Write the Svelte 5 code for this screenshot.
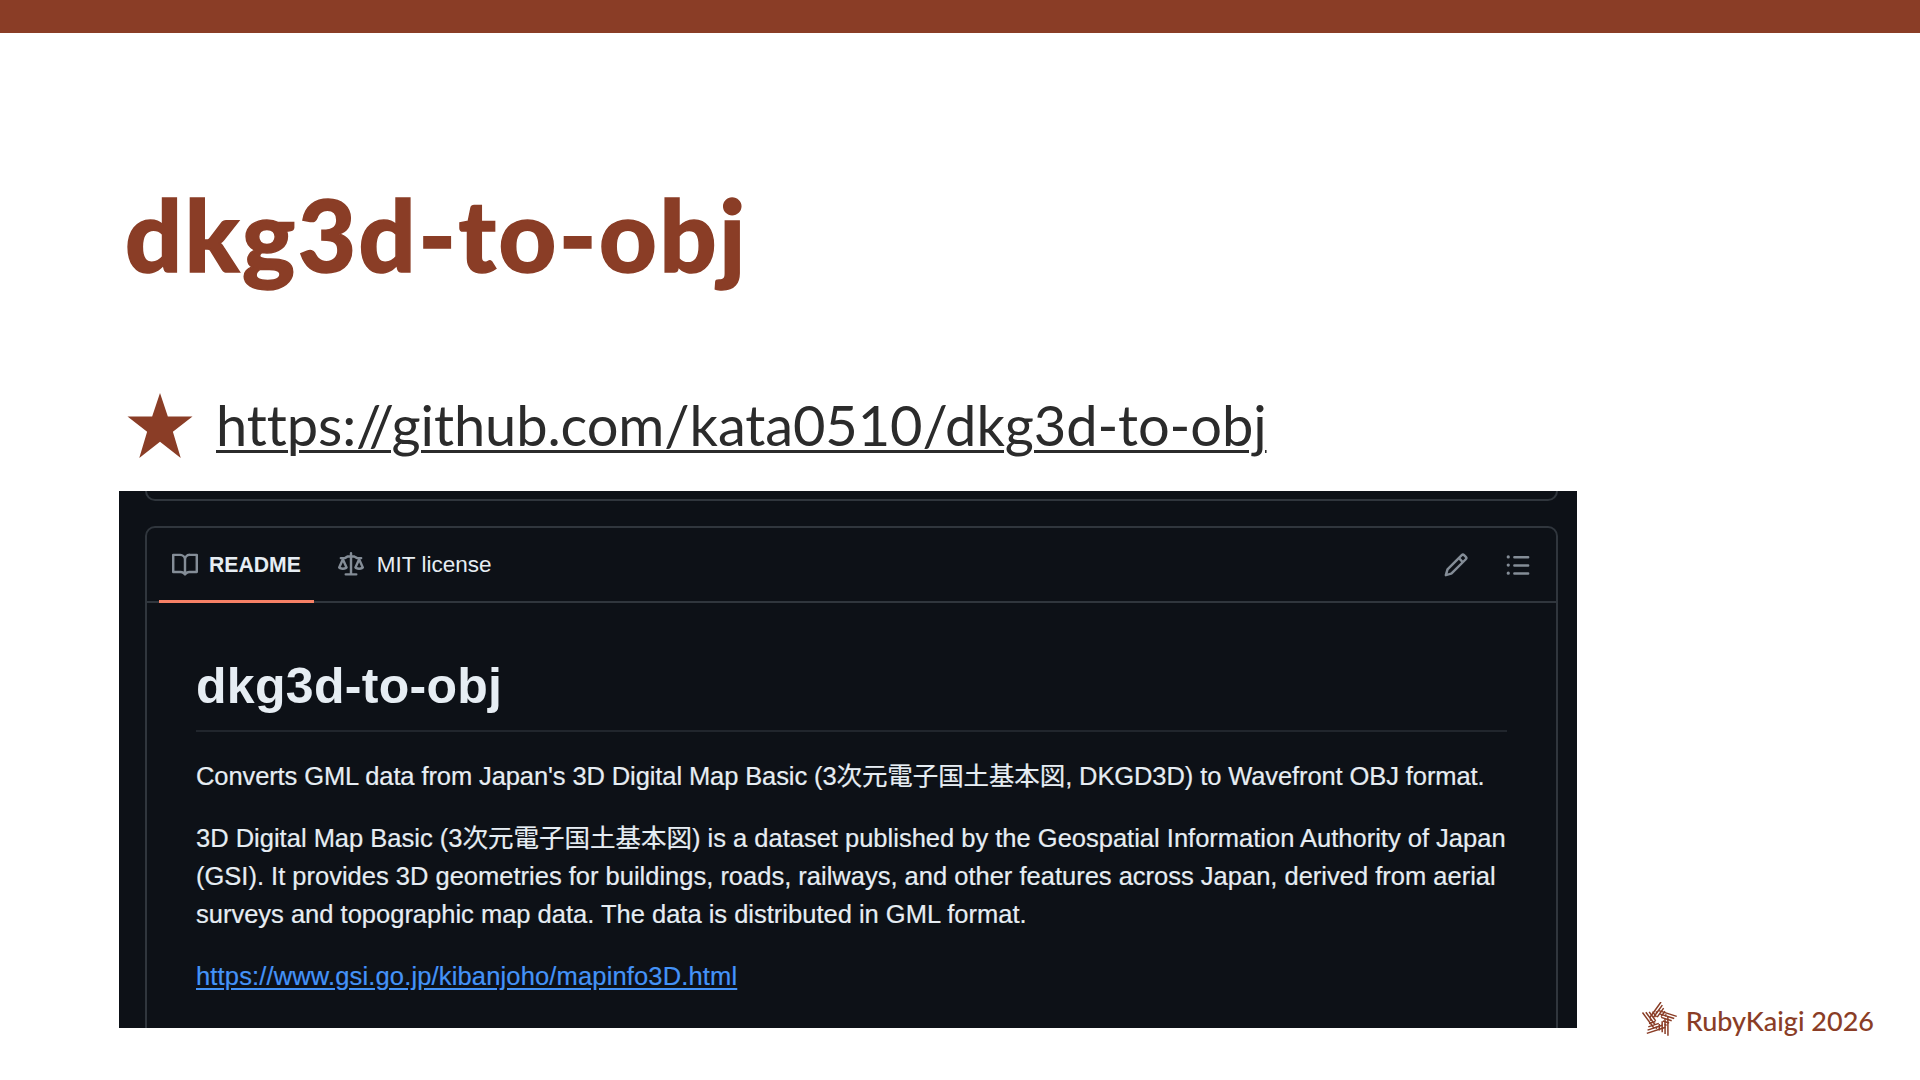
<script>
	const arms = [0, 72, 144, 216, 288];
	const A = [2, -18];
	const B = [-9.5, -2];
	const C = [8, -4];
	const lerp = (p, q, t) => [p[0] + (q[0] - p[0]) * t, p[1] + (q[1] - p[1]) * t];

	// stripes of one star arm, parallel to its long edge
	const stripes = [0, 0.22, 0.44, 0.66, 0.88].map((t) => {
		const s = lerp(B, C, t);
		const e = lerp(A, C, t);
		return `M${s[0].toFixed(2)} ${s[1].toFixed(2)} L${e[0].toFixed(2)} ${e[1].toFixed(2)}`;
	}).join(' ');
</script>

<div class="slide">
	<div class="topbar"></div>
	<h1 class="title">dkg3d-to-obj</h1>
	<div class="link-row">
		<svg class="star" viewBox="0 0 58 58" aria-hidden="true">
			<path d="M29 0 L36 21 L58 21 L40.5 34.5 L47.5 58 L29 43.500 L10.500 58 L17.500 34.500 L0 21 L22 21 Z" />
		</svg>
		<span class="url">https://github.com/kata0510/dkg3d-to-obj</span>
	</div>
	<div class="bottom">
		<div class="shot">
			<div class="prev-card"></div>
			<div class="card">
				<div class="tabs">
					<div class="tab active">
						<svg class="ico" viewBox="0 0 16 16" aria-hidden="true">
							<path d="M0 1.750A.750.750 0 0 1 .750 1h4.253c1.227 0 2.317.590 3 1.501A3.744 3.744 0 0 1 11.006 1h4.245a.750.750 0 0 1 .750.750v10.500a.750.750 0 0 1-.750.750h-4.507a2.250 2.250 0 0 0-1.591.659l-.622.621a.750.750 0 0 1-1.060 0l-.622-.621A2.250 2.250 0 0 0 5.258 13H.750a.750.750 0 0 1-.750-.750Zm7.251 10.324.004-5.073-.002-2.253A2.250 2.250 0 0 0 5.003 2.500H1.500v9h3.757a3.750 3.750 0 0 1 1.994.574ZM8.755 4.750l-.004 7.322a3.752 3.752 0 0 1 1.992-.572H14.500v-9h-3.495a2.250 2.250 0 0 0-2.250 2.250Z" />
						</svg>
						<span>README</span>
					</div>
					<div class="tab license">
						<svg class="ico" viewBox="0 0 16 16" aria-hidden="true">
							<path d="M8.750.750V2h.985c.304 0 .603.080.867.231l1.290.736c.038.022.080.033.124.033h2.234a.750.750 0 0 1 0 1.500h-.427l2.111 4.692a.750.750 0 0 1-.154.838l-.530-.530.529.531-.001.002-.002.002-.006.006-.006.005-.010.010-.045.040c-.210.176-.441.327-.686.450C14.556 10.780 13.880 11 13 11a4.498 4.498 0 0 1-2.023-.454 3.544 3.544 0 0 1-.686-.450l-.045-.040-.016-.015-.006-.006-.004-.004v-.001a.750.750 0 0 1-.154-.838L12.178 4.500h-.162c-.305 0-.604-.079-.868-.231l-1.290-.736a.245.245 0 0 0-.124-.033H8.750V13h2.500a.750.750 0 0 1 0 1.500h-6.500a.750.750 0 0 1 0-1.500h2.500V3.500h-.984a.245.245 0 0 0-.124.033l-1.289.737c-.265.150-.564.230-.869.230h-.162l2.112 4.692a.750.750 0 0 1-.154.838l-.530-.530.529.531-.001.002-.002.002-.006.006-.016.015-.045.040c-.210.176-.441.327-.686.450C4.556 10.780 3.880 11 3 11a4.498 4.498 0 0 1-2.023-.454 3.544 3.544 0 0 1-.686-.450l-.045-.040-.016-.015-.006-.006-.004-.004v-.001a.750.750 0 0 1-.154-.838L2.178 4.500H1.750a.750.750 0 0 1 0-1.500h2.234a.249.249 0 0 0 .125-.033l1.288-.737c.265-.150.564-.230.869-.230h.984V.750a.750.750 0 0 1 1.500 0Zm2.945 8.477c.285.135.718.273 1.305.273s1.020-.138 1.305-.273L13 6.327Zm-10 0c.285.135.718.273 1.305.273s1.020-.138 1.305-.273L3 6.327Z" />
						</svg>
						<span>MIT license</span>
					</div>
					<div class="tools">
						<svg class="ico" viewBox="0 0 16 16" aria-hidden="true">
							<path d="M11.013 1.427a1.750 1.750 0 0 1 2.474 0l1.086 1.086a1.750 1.750 0 0 1 0 2.474l-8.610 8.610c-.210.210-.470.364-.756.445l-3.251.930a.750.750 0 0 1-.927-.928l.929-3.250c.081-.286.235-.547.445-.758l8.610-8.610Zm.176 4.823L9.750 4.810l-6.286 6.287a.253.253 0 0 0-.064.108l-.558 1.953 1.953-.558a.253.253 0 0 0 .108-.064Zm1.238-3.763a.250.250 0 0 0-.354 0L10.811 3.750l1.439 1.440 1.263-1.263a.250.250 0 0 0 0-.354Z" />
						</svg>
						<svg class="ico" viewBox="0 0 16 16" aria-hidden="true">
							<path d="M5.750 2.500h8.500a.750.750 0 0 1 0 1.500h-8.500a.750.750 0 0 1 0-1.500Zm0 5h8.500a.750.750 0 0 1 0 1.500h-8.500a.750.750 0 0 1 0-1.500Zm0 5h8.500a.750.750 0 0 1 0 1.500h-8.500a.750.750 0 0 1 0-1.500ZM2 14a1 1 0 1 1 0-2 1 1 0 0 1 0 2Zm1-6a1 1 0 1 1-2 0 1 1 0 0 1 2 0ZM2 4a1 1 0 1 1 0-2 1 1 0 0 1 0 2Z" />
						</svg>
					</div>
				</div>
				<div class="readme">
					<h2>dkg3d-to-obj</h2>
					<p class="lead">Converts GML data from Japan's 3D Digital Map Basic (3次元電子国土基本図, DKGD3D) to Wavefront OBJ format.</p>
					<p>3D Digital Map Basic (3次元電子国土基本図) is a dataset published by the Geospatial Information Authority of Japan (GSI). It provides 3D geometries for buildings, roads, railways, and other features across Japan, derived from aerial surveys and topographic map data. The data is distributed in GML format.</p>
					<p class="doc-link">https://www.gsi.go.jp/kibanjoho/mapinfo3D.html</p>
				</div>
			</div>
		</div>
		<div class="brand">
			<svg class="mark" viewBox="-18 -18 36 36" aria-hidden="true">
				{#each arms as angle}
					<path transform="rotate({angle})" d={stripes} />
				{/each}
			</svg>
			<span>RubyKaigi 2026</span>
		</div>
	</div>
</div>

<style>
	:global(body) {
		margin: 0;
		background: #fff;
	}

	.slide {
		width: 1920px;
		height: 1080px;
		overflow: hidden;
		display: flex;
		flex-direction: column;
		font-family: 'Lato', 'Noto Sans', sans-serif;
	}

	.topbar {
		height: 33px;
		background: #8a3d26;
	}

	.title {
		margin: 141px 0 0 125px;
		height: 118px;
		font-size: 100px;
		line-height: 118px;
		font-weight: 900;
		color: #8a3d26;
		letter-spacing: 2.7px;
		-webkit-text-stroke: 1.5px #8a3d26;
	}

	.link-row {
		margin: 100px 0 0 126px;
		height: 66px;
		display: flex;
		align-items: center;
		gap: 22px;
	}

	.star {
		width: 68px;
		height: 65px;
		fill: #8a3d26;
	}

	.url {
		font-size: 56px;
		line-height: 66px;
		font-weight: 400;
		color: #2b2b2b;
		letter-spacing: -0.1px;
		text-decoration: underline;
		text-decoration-thickness: 3px;
		text-underline-offset: 4px;
	}

	.bottom {
		margin: 33px 0 0 119px;
		display: flex;
		align-items: flex-end;
		justify-content: space-between;
		padding-right: 46px;
	}

	.shot {
		width: 1458px;
		height: 537px;
		box-sizing: border-box;
		padding: 0 19px 0 26px;
		background: #0d1117;
		overflow: hidden;
		color: #e6edf3;
		font-family: 'Liberation Sans', 'Noto Sans CJK JP', sans-serif;
	}

	.prev-card {
		height: 10px;
		box-sizing: border-box;
		border: 2px solid #30363d;
		border-top: 0;
		border-radius: 0 0 10px 10px;
	}

	.card {
		margin-top: 25px;
		height: 560px;
		box-sizing: border-box;
		border: 2px solid #30363d;
		border-radius: 10px;
	}

	.tabs {
		height: 75px;
		box-sizing: border-box;
		padding: 0 25px 0 12px;
		border-bottom: 2px solid #30363d;
		display: flex;
		align-items: stretch;
	}

	.tab {
		display: flex;
		align-items: center;
		gap: 11px;
		padding: 2px 13px 0;
		margin-bottom: -2px;
		border-bottom: 3px solid transparent;
	}

	.tab.active {
		font-size: 21.200px;
		font-weight: 700;
		border-bottom-color: #f78166;
		margin-right: 11px;
	}

	.tab.license {
		gap: 13px;
		font-size: 22.500px;
	}

	.ico {
		width: 26px;
		height: 26px;
		fill: #848d97;
	}

	.tools {
		margin-left: auto;
		display: flex;
		align-items: center;
		gap: 36px;
	}

	.readme {
		padding: 0 49px;
	}

	h2 {
		margin: 0;
		padding: 53px 0 14px;
		font-size: 50px;
		line-height: 60px;
		font-weight: 700;
		letter-spacing: 0.3px;
		border-bottom: 2px solid #21262d;
	}

	p {
		margin: 0;
		padding-top: 24px;
		font-size: 25.500px;
		line-height: 38px;
		-webkit-text-stroke: 0.2px #e6edf3;
	}

	.lead {
		padding-top: 25px;
		letter-spacing: -0.1px;
	}

	.doc-link {
		color: #4493f8;
		letter-spacing: 0.15px;
		-webkit-text-stroke: 0.2px #4493f8;
		text-decoration: underline;
		text-underline-offset: 3px;
	}

	.brand {
		display: flex;
		align-items: center;
		gap: 9px;
		margin-bottom: -10px;
		font-size: 27px;
		font-weight: 500;
		color: #8a3d26;
	}

	.mark {
		width: 36px;
		height: 36px;
		fill: none;
		stroke: #8a3d26;
		stroke-width: 1.500;
	}
</style>
